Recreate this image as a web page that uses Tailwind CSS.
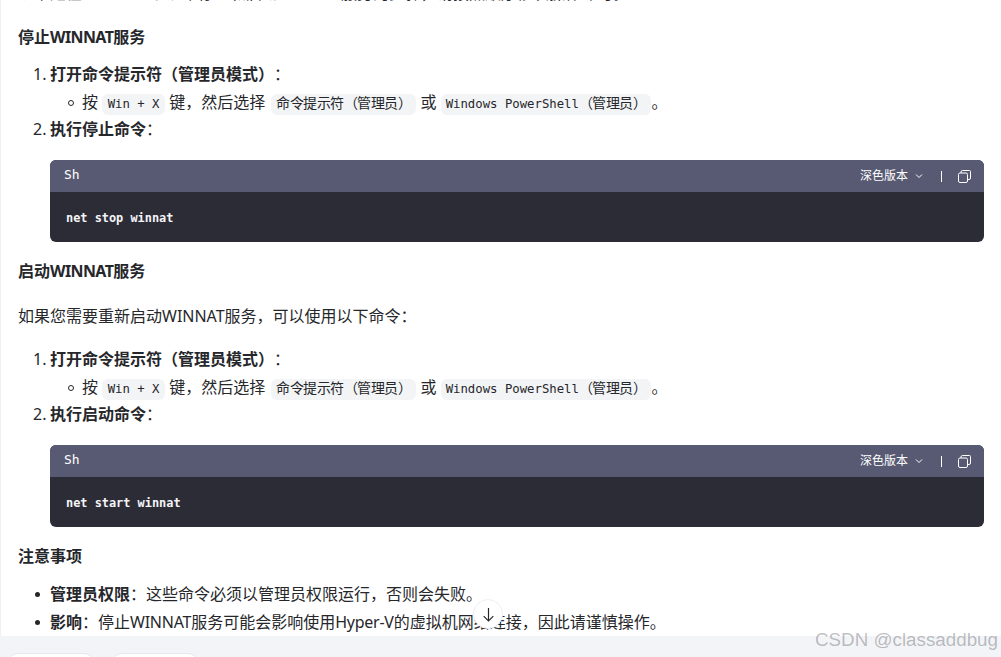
<!DOCTYPE html>
<html lang="zh-CN">
<head>
  <meta charset="UTF-8">
  <title>WINNAT</title>
  <script src="https://cdn.jsdelivr.net/npm/@tailwindcss/browser@4"></script>
</head>
<body class="bg-white overflow-hidden font-['Noto_Sans','Noto_Sans_CJK_SC',sans-serif] [text-spacing-trim:space-all]">
<div class="relative w-[1001px] h-[657px] overflow-hidden bg-[#f3f4f8]">

  <!-- message body -->
  <div class="h-[636px] overflow-hidden bg-white pl-[17px] pr-[17px] border-l border-[#eef0f6] text-[16px] leading-[28px] text-[#26272b]">
    <p class="-mt-[21px] whitespace-nowrap">以下是在Windows系统中停止和启动WINNAT服务的步骤，请按照顺序依次操作即可。</p>

    <h3 class="mt-[16px] font-bold h-[28px]">停止<span class="tracking-[-0.6px]">WINNAT</span>服务</h3>
    <ol class="mt-[9px] pl-[32px]">
      <li class="relative"><span class="absolute -left-[17px]">1.</span><b>打开命令提示符（管理员模式）</b>：
        <ul class="pl-[32px]">
          <li class="relative h-[27px]"><span class="absolute -left-[14px] top-[12px] w-[6px] h-[6px] rounded-full border border-[#26272b]"></span>按 <code class="text-[14px] leading-[21px] inline-block bg-[#f3f4f6] rounded-md px-[5.500px]"><span class="font-['DejaVu_Sans_Mono',monospace] text-[12.300px]">Win + X</span></code> 键，然后选择 <code class="ml-[2px] text-[14px] tracking-[-0.5px] leading-[21px] inline-block bg-[#f3f4f6] rounded-md px-[5px]">命令提示符（管理员）</code> 或 <code class="text-[14px] tracking-[-0.5px] leading-[21px] inline-block bg-[#f3f4f6] rounded-md px-[5px]"><span class="font-['DejaVu_Sans_Mono',monospace] text-[12.300px] tracking-normal">Windows PowerShell</span>（管理员）</code>。</li>
        </ul>
      </li>
      <li class="relative"><span class="absolute -left-[17px]">2.</span><b>执行停止命令</b>：</li>
    </ol>
    <div class="mt-[17px] ml-[32px] h-[82px] rounded-md overflow-hidden bg-[#2c2c36]">
      <div class="h-[32px] bg-[#585a73] flex items-center pl-[14px] pr-[13px] text-white">
        <span class="font-['DejaVu_Sans_Mono',monospace] text-[13px] leading-[28px] -mt-[2px]">Sh</span>
        <span class="ml-auto text-[12px]">深色版本</span>
        <svg class="ml-[6px] w-[10px] h-[10px]" viewBox="0 0 10 10" fill="none" stroke="#fff" stroke-width="1"><path d="M2 3.5l3 3 3-3"/></svg>
        <span class="ml-[17px] w-px h-[11px] bg-white"></span>
        <svg class="ml-[16px] w-[13px] h-[13px]" viewBox="0 0 13 13" fill="none" stroke="#fff" stroke-width="1"><rect x=".5" y="3" width="9" height="9.5" rx="1.5"/><path d="M3 3V2a1.5 1.5 0 0 1 1.5-1.5h7A1 1 0 0 1 12.5 1.5V8A1.5 1.5 0 0 1 11 9.500H9.500"/></svg>
      </div>
      <pre class="pl-[16px] pt-[12px] font-['DejaVu_Sans_Mono',monospace] text-[11.900px] leading-[28px] font-bold text-[#f4f4f6]">net stop winnat</pre>
    </div>

    <h3 class="mt-[15px] font-bold h-[28px]">启动<span class="tracking-[-0.6px]">WINNAT</span>服务</h3>
    <p class="mt-[17px]">如果您需要重新启动WINNAT服务，可以使用以下命令：</p>
    <ol class="mt-[15px] pl-[32px]">
      <li class="relative"><span class="absolute -left-[17px]">1.</span><b>打开命令提示符（管理员模式）</b>：
        <ul class="pl-[32px]">
          <li class="relative h-[27px]"><span class="absolute -left-[14px] top-[12px] w-[6px] h-[6px] rounded-full border border-[#26272b]"></span>按 <code class="text-[14px] leading-[21px] inline-block bg-[#f3f4f6] rounded-md px-[5.500px]"><span class="font-['DejaVu_Sans_Mono',monospace] text-[12.300px]">Win + X</span></code> 键，然后选择 <code class="ml-[2px] text-[14px] tracking-[-0.5px] leading-[21px] inline-block bg-[#f3f4f6] rounded-md px-[5px]">命令提示符（管理员）</code> 或 <code class="text-[14px] tracking-[-0.5px] leading-[21px] inline-block bg-[#f3f4f6] rounded-md px-[5px]"><span class="font-['DejaVu_Sans_Mono',monospace] text-[12.300px] tracking-normal">Windows PowerShell</span>（管理员）</code>。</li>
        </ul>
      </li>
      <li class="relative"><span class="absolute -left-[17px]">2.</span><b>执行启动命令</b>：</li>
    </ol>
    <div class="mt-[17px] ml-[32px] h-[82px] rounded-md overflow-hidden bg-[#2c2c36]">
      <div class="h-[32px] bg-[#585a73] flex items-center pl-[14px] pr-[13px] text-white">
        <span class="font-['DejaVu_Sans_Mono',monospace] text-[13px] leading-[28px] -mt-[2px]">Sh</span>
        <span class="ml-auto text-[12px]">深色版本</span>
        <svg class="ml-[6px] w-[10px] h-[10px]" viewBox="0 0 10 10" fill="none" stroke="#fff" stroke-width="1"><path d="M2 3.5l3 3 3-3"/></svg>
        <span class="ml-[17px] w-px h-[11px] bg-white"></span>
        <svg class="ml-[16px] w-[13px] h-[13px]" viewBox="0 0 13 13" fill="none" stroke="#fff" stroke-width="1"><rect x=".5" y="3" width="9" height="9.5" rx="1.5"/><path d="M3 3V2a1.5 1.5 0 0 1 1.5-1.5h7A1 1 0 0 1 12.5 1.5V8A1.5 1.5 0 0 1 11 9.500H9.500"/></svg>
      </div>
      <pre class="pl-[16px] pt-[12px] font-['DejaVu_Sans_Mono',monospace] text-[11.900px] leading-[28px] font-bold text-[#f4f4f6]">net start winnat</pre>
    </div>

    <h3 class="mt-[15px] font-bold h-[28px]">注意事项</h3>
    <ul class="mt-[10px] pl-[32px]">
      <li class="relative"><span class="absolute -left-[15px] top-[12px] w-[5px] h-[5px] rounded-full bg-[#26272b]"></span><b>管理员权限</b>：这些命令必须以管理员权限运行，否则会失败。</li>
      <li class="relative"><span class="absolute -left-[15px] top-[12px] w-[5px] h-[5px] rounded-full bg-[#26272b]"></span><b>影响</b>：停止<span class="tracking-[-0.25px]">WINNAT</span>服务可能会影响使用<span class="tracking-[-0.25px]">Hyper-V</span>的虚拟机网络连接，因此请谨慎操作。</li>
    </ul>
  </div>

  <!-- scroll to bottom button -->
  <div class="absolute left-[473px] top-[599px] w-[30px] h-[30px] rounded-full bg-white border border-[#eeeff4] flex items-center justify-center">
    <svg class="w-[15px] h-[15px]" viewBox="0 0 14 14" fill="none" stroke="#26272b" stroke-width="1.100"><path d="M7 1v12M2.500 8.500l4.500 4.500 4.500-4.500"/></svg>
  </div>

  <!-- suggestion pills cut by the bottom edge -->
  <div class="absolute left-[8px] top-[653px] flex gap-[18px]">
    <div class="w-[86px] h-[20px] rounded-full bg-white border border-[#e6e7ee]"></div>
    <div class="w-[86px] h-[20px] rounded-full bg-white border border-[#e6e7ee]"></div>
  </div>

  <!-- watermark -->
  <div class="absolute right-[3px] top-[628px] font-['Liberation_Sans',sans-serif] text-[18.800px] leading-[24px] text-[#26272b]/30 whitespace-nowrap">CSDN @classaddbug</div>
</div>
</body>
</html>
